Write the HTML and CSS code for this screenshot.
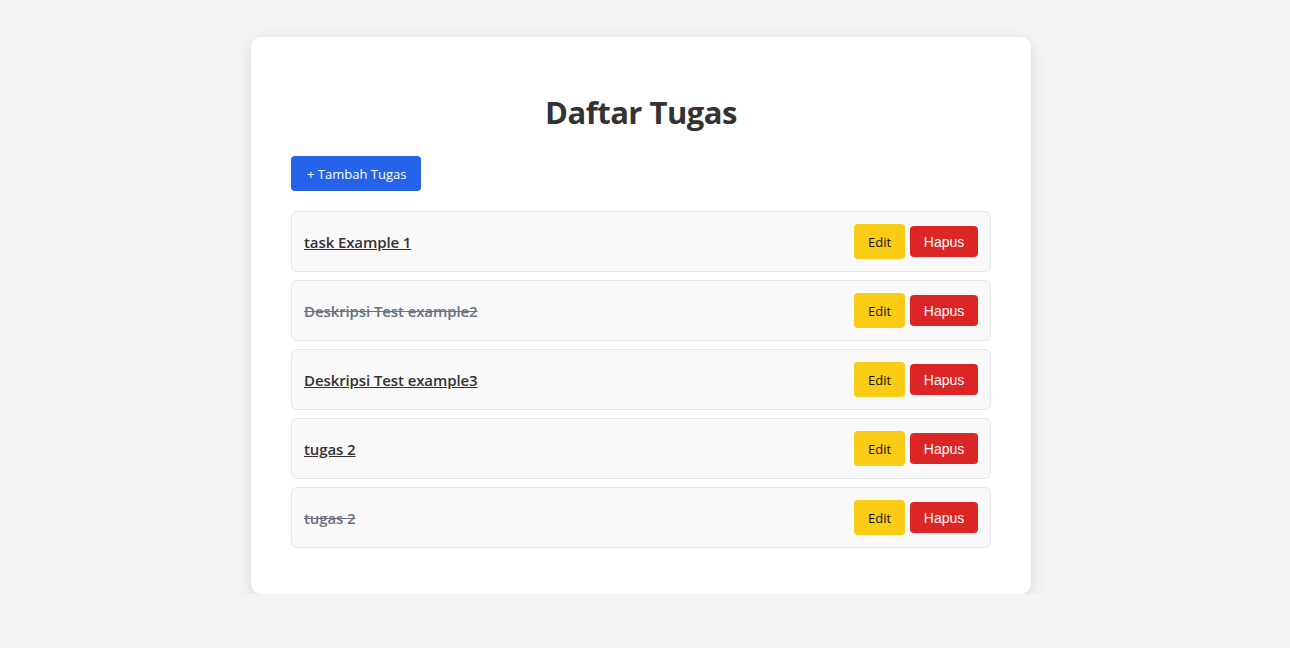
FILE: index.html
```html
<!DOCTYPE html>
<html lang="id">
<head>
<meta charset="utf-8">
<title>Daftar Tugas</title>
<link rel="stylesheet" href="styles.css">
</head>
<body>
<main class="card">
  <h1 class="title">Daftar Tugas</h1>
  <div class="toolbar">
    <a class="btn-add" href="#">+ Tambah Tugas</a>
  </div>
  <ul class="list">
    <li class="item">
      <a class="task" href="#">task Example 1</a>
      <div class="actions"><a class="btn-edit" href="#">Edit</a><button class="btn-del">Hapus</button></div>
    </li>
    <li class="item">
      <a class="task done" href="#">Deskripsi Test example2</a>
      <div class="actions"><a class="btn-edit" href="#">Edit</a><button class="btn-del">Hapus</button></div>
    </li>
    <li class="item">
      <a class="task" href="#">Deskripsi Test example3</a>
      <div class="actions"><a class="btn-edit" href="#">Edit</a><button class="btn-del">Hapus</button></div>
    </li>
    <li class="item">
      <a class="task" href="#">tugas 2</a>
      <div class="actions"><a class="btn-edit" href="#">Edit</a><button class="btn-del">Hapus</button></div>
    </li>
    <li class="item">
      <a class="task done" href="#">tugas 2</a>
      <div class="actions"><a class="btn-edit" href="#">Edit</a><button class="btn-del">Hapus</button></div>
    </li>
  </ul>
</main>
</body>
</html>
```

FILE: styles.css
```css
* { box-sizing: border-box; }
html, body { margin: 0; padding: 0; }
body {
  background: #f3f4f6;
  font-family: "Open Sans", "Noto Sans", sans-serif;
  color: #333;
  padding-right: 8px;
}
.card {
  width: 780px;
  margin: 37px auto 0;
  background: #fff;
  border-radius: 10px;
  box-shadow: 0 4px 16px rgba(0,0,0,0.12);
  padding: 40px 40px 46px;
}
.title {
  margin: 15px 0 24px;
  text-align: center;
  font-size: 31px;
  font-weight: 700;
  line-height: 40px;
  color: #333;
  letter-spacing: -0.5px;
}
.toolbar { display: flex; margin-bottom: 20px; }
.btn-add {
  display: inline-flex;
  align-items: center;
  height: 35px;
  padding: 0 15px 0 16px;
  background: #2563eb;
  color: #fff;
  text-decoration: none;
  border-radius: 4px;
  font-size: 13px;
}
.list { list-style: none; margin: 0; padding: 0; display: flex; flex-direction: column; gap: 8px; }
.item {
  display: flex;
  align-items: center;
  justify-content: space-between;
  padding: 12px;
  background: #f9f9f9;
  border: 1px solid #e5e7eb;
  border-radius: 6px;
}
.task {
  color: #333;
  font-size: 15px;
  font-weight: 600;
  text-decoration: underline;
  letter-spacing: -0.1px;
}
.task.done { color: #6b7280; text-decoration: line-through; }
.actions { display: flex; align-items: center; gap: 5px; }
.btn-edit {
  display: inline-flex;
  align-items: center;
  justify-content: center;
  width: 51px;
  height: 35px;
  background: #facc15;
  color: #111;
  text-decoration: none;
  border-radius: 4px;
  font-size: 13px;
}
.btn-del {
  width: 68px;
  height: 31px;
  border: none;
  background: #dc2626;
  color: #fff;
  border-radius: 4px;
  font-family: "Liberation Sans", Arial, sans-serif;
  font-size: 14px;
  padding: 0;
}
```
